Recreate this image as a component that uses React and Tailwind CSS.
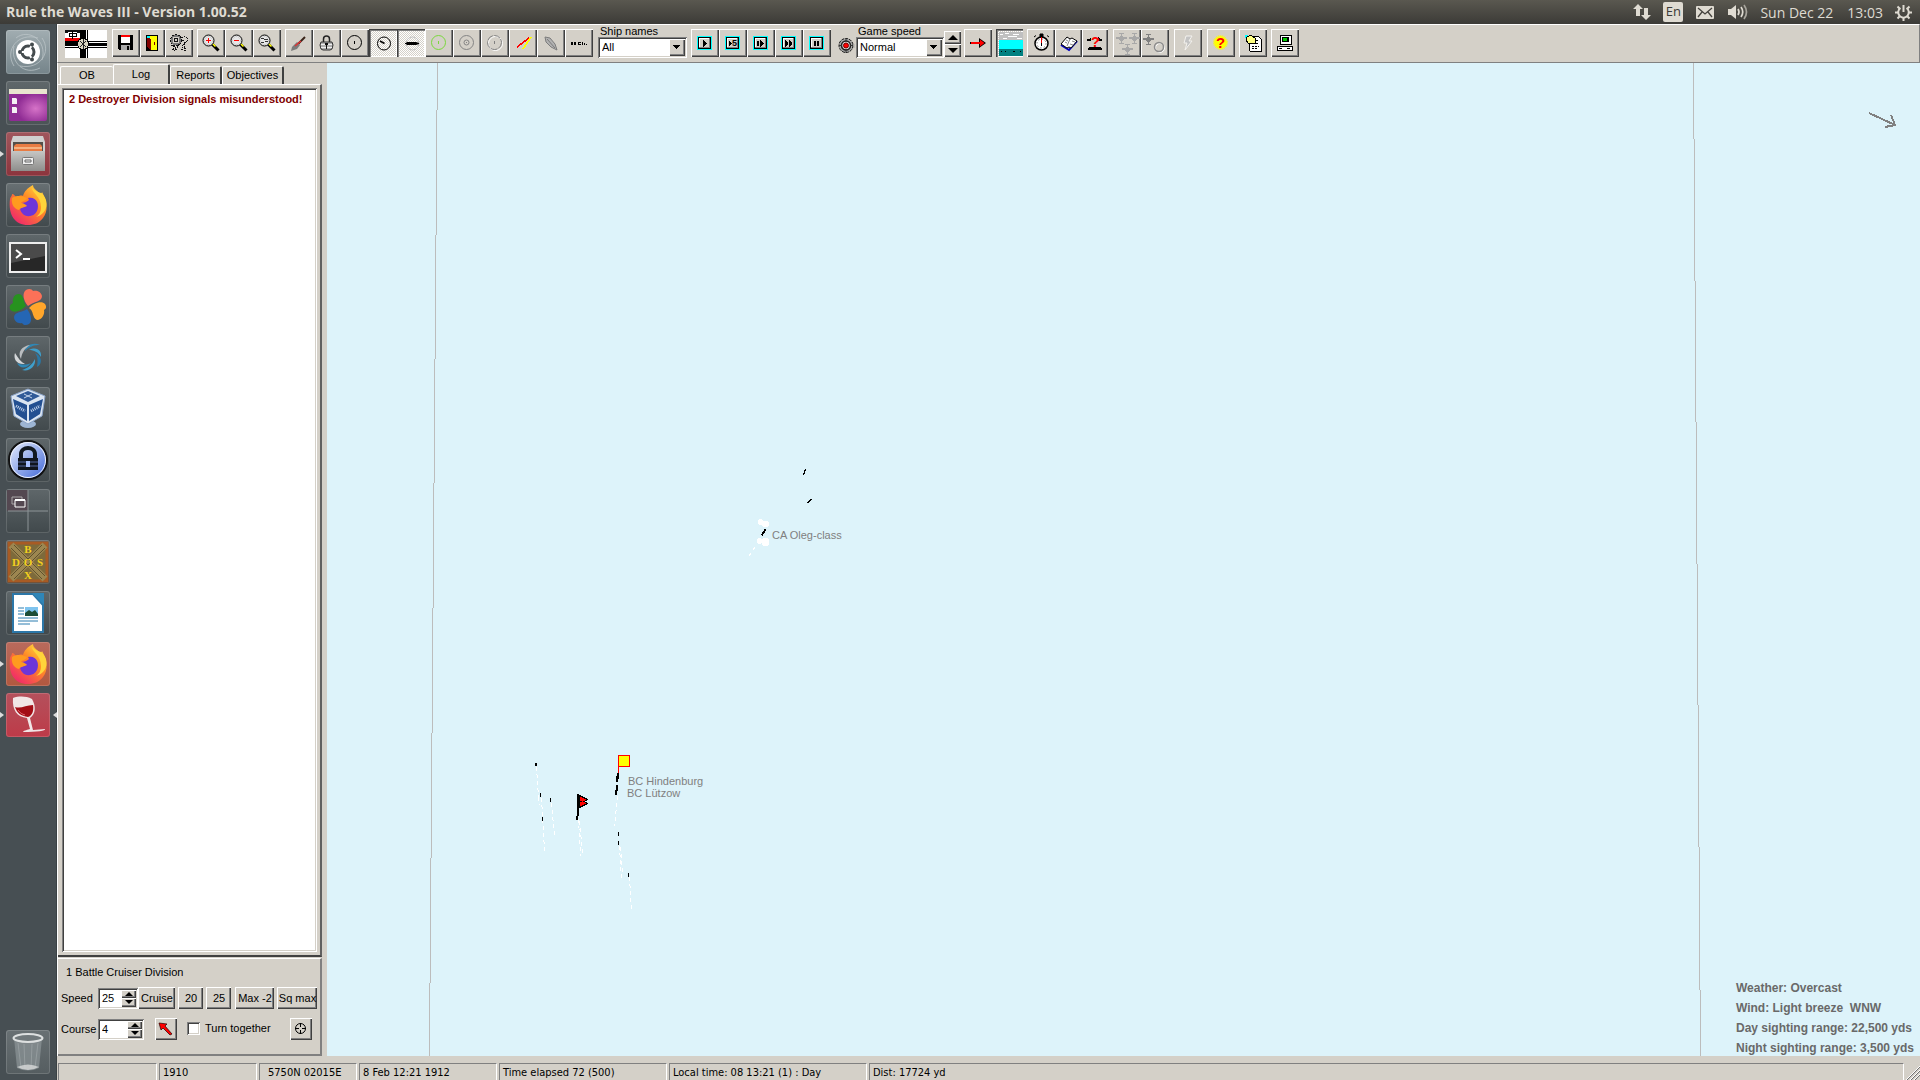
import { useState } from "react";
import clsx from "clsx";

const raised = "bg-[#d4d0c8] shadow-[inset_1px_1px_0_#fff,inset_-1px_-1px_0_#404040,inset_-2px_-2px_0_#808080]";
const sunken = "bg-white shadow-[inset_1px_1px_0_#808080,inset_-1px_-1px_0_#fff,inset_2px_2px_0_#404040,inset_-2px_-2px_0_#d4d0c8]";
const pressed =
  "bg-[repeating-conic-gradient(#fff_0_25%,#d4d0c8_0_50%)] bg-[length:2px_2px] shadow-[inset_1px_1px_0_#404040,inset_2px_2px_0_#808080,inset_-1px_-1px_0_#fff]";

function Glyph({ children, size = 28, crisp = false }) {
  return (
    <svg width={size} height={size} viewBox="0 0 28 28" fill="none" shapeRendering={crisp ? "crispEdges" : "auto"}>
      {children}
    </svg>
  );
}

function ToolButton({ label, active, className = "w-7", children }) {
  return (
    <button aria-label={label} className={clsx("h-7 shrink-0 overflow-hidden", active ? pressed : raised, className)}>
      {children}
    </button>
  );
}

function Magnifier({ children }) {
  return (
    <Glyph>
      <path d="M15 15L21.500 21.500" stroke="#000" strokeWidth="3" />
      <path d="M15.500 14.500l3 3" stroke="#ff0" strokeWidth="1.500" />
      <circle cx="11.500" cy="11.500" r="5.500" fill="#e8e8e8" stroke="#000" />
      <circle cx="11.500" cy="11.500" r="4" stroke="#b8b8b8" strokeDasharray="1 1" />
      {children}
    </Glyph>
  );
}

function PlayFrame({ children }) {
  return (
    <Glyph crisp>
      <path d="M6 7h15v14H6z" fill="#0ff" />
      <path d="M7 8h13v12H7z" fill="#000" />
      <path d="M8 9h11v10H8z" fill="#808080" />
      <path d="M8 9h10v9H8z" fill="#fff" />
      <path d="M9 10h9v8H9z" fill="#d4d0c8" />
      {children}
    </Glyph>
  );
}

function Plane({ x, y, color = "#a8a8a8" }) {
  return (
    <path
      transform={`translate(${x} ${y})`}
      fill={color}
      d="M3 0h5v1H3zM5 1h1v2H5zM0 4h11v2H8v1H7v1H4V7H3V6H0zM4 3h3v1H4zM5 8h1v3H5zM3 10h5v1H3z"
    />
  );
}

function Flag() {
  return (
    <svg width="42" height="28" viewBox="0 0 42 28" shapeRendering="crispEdges" className="shrink-0">
      <path d="M0 0h42v28H0z" fill="#fff" />
      <path d="M0 0h16v3H0z" fill="#111" />
      <path d="M0 8h15v3H0z" fill="#f00000" />
      <path d="M3 2h9v5H3z" fill="#fff" />
      <path d="M4 3h7v3H4zM7 1v8" stroke="#000" fill="none" />
      <path d="M0 12h42v4H0zM16 0h5v28h-5z" fill="#000" />
      <path d="M0 11h42M0 17h42M15 0v28M22 0v28" stroke="#000" />
      <path d="M0 16h42M22 12h20" stroke="#fff" />
      <circle cx="18" cy="14" r="5.5" fill="#d8d4c0" stroke="#000" />
      <path d="M15 11l6 6M21 11l-6 6M18 9v10" stroke="#222" strokeWidth="1" />
    </svg>
  );
}

function ComboBox({ label, id, options, className }) {
  return (
    <div className={clsx("flex shrink-0 flex-col", className)}>
      <label htmlFor={id} className="h-3 pl-[2px] font-['Liberation_Sans'] text-[11px] leading-3">
        {label}
      </label>
      <div className="relative">
        <select
          id={id}
          className={clsx("block h-[21px] w-full appearance-none pl-[4px] font-['Liberation_Sans'] text-[11px]", sunken)}
        >
          {options.map((o) => (
            <option key={o}>{o}</option>
          ))}
        </select>
        <span className={clsx("pointer-events-none absolute top-[2px] right-[2px] h-[17px] w-4", raised)}>
          <svg width="16" height="16" shapeRendering="crispEdges">
            <path d="M4 6h7v1H4zM5 7h5v1H5zM6 8h3v1H6zM7 9h1v1H7z" />
          </svg>
        </span>
      </div>
    </div>
  );
}

function UpDown({ onUp, onDown, className, tall }) {
  const half = clsx("flex flex-1 items-center justify-center", raised);
  return (
    <span className={clsx("flex shrink-0 flex-col", className)}>
      <button aria-label="Increase" onClick={onUp} className={half}>
        <svg width={tall ? 10 : 8} height={tall ? 5 : 4} viewBox="0 0 8 4">
          <path d="M4 0L8 4H0z" />
        </svg>
      </button>
      <button aria-label="Decrease" onClick={onDown} className={half}>
        <svg width={tall ? 10 : 8} height={tall ? 5 : 4} viewBox="0 0 8 4">
          <path d="M0 0h8L4 4z" />
        </svg>
      </button>
    </span>
  );
}

function SpinBox({ id, label, initial, className }) {
  const [value, setValue] = useState(initial);
  return (
    <>
      <label htmlFor={id} className="w-9 shrink-0">
        {label}
      </label>
      <span className={clsx("flex h-[21px] shrink-0 p-[2px]", sunken, className)}>
        <input
          id={id}
          value={value}
          onChange={(e) => setValue(Number(e.target.value) || 0)}
          className="w-0 flex-1 bg-transparent pl-[2px] outline-none"
        />
        <UpDown className="w-[15px]" onUp={() => setValue(value + 1)} onDown={() => setValue(value - 1)} />
      </span>
    </>
  );
}

function TitleBar() {
  return (
    <header className="flex h-6 shrink-0 items-center bg-linear-to-b from-[#5a5850] to-[#3c3b37] pl-[6px] font-['Open_Sans'] text-[#dfdbd2]">
      <h1 className="text-[14px] leading-6 font-bold">Rule the Waves III - Version 1.00.52</h1>
      <div className="ml-auto flex items-center pr-2 text-[14px]">
        <svg width="18" height="18" viewBox="0 0 18 18" fill="#dfdbd2">
          <path d="M5 1L10 6H7v7H3V6H0zM13 17L8 12h3V5h4v7h3z" />
        </svg>
        <span className="ml-3 flex h-5 w-5 items-center justify-center rounded-xs bg-[#dfdbd2] text-[13px] text-[#3c3b37]">
          En
        </span>
        <svg width="18" height="13" viewBox="0 0 18 13" className="ml-[13px]">
          <rect width="18" height="13" rx="1" fill="#dfdbd2" />
          <path d="M2 2l7 6 7-6M2 11l4-5M16 11l-4-5" stroke="#45433e" strokeWidth="1.3" fill="none" />
        </svg>
        <svg width="20" height="18" viewBox="0 0 20 18" className="ml-[14px]" fill="none" stroke="#dfdbd2" strokeWidth="1.7">
          <path d="M0 6h3l5-4v14l-5-4H0z" fill="#dfdbd2" stroke="none" />
          <path d="M10 6q2 3 0 6M13 4q3.500 5 0 10" />
          <path d="M16 2q5 7 0 14" stroke="#a8a59d" />
        </svg>
        <span className="ml-3">Sun Dec 22</span>
        <span className="ml-[14px]">13:03</span>
        <svg width="17" height="17" viewBox="0 0 17 17" className="ml-3" fill="none" stroke="#dfdbd2">
          <path d="M5.500 4a5.300 5.300 0 1 0 6 0" strokeWidth="2" />
          <path d="M8.500 1v7" strokeWidth="2" />
          <path d="M0 8.500h3M14 8.500h3M2.500 2.500l2 2M14.500 2.500l-2 2M2.500 14.500l2-2M14.500 14.500l-2-2M8.500 14v3" strokeWidth="2" />
        </svg>
      </div>
    </header>
  );
}

function FirefoxIcon() {
  return (
    <>
      <path
        d="M4 16c1-3 2-3 2-5 2 0 3 2 4 3 3-1 5-2 7-1 1-4 4-8 10-11 0 4 4 5 7 9 2-1 2-2 2-2 6 10 6 20 1 26-4 5-9 7-15 7C9 42 2 32 4 16z"
        fill="url(#fox)"
      />
      <path d="M22 15c8-2 12 6 9 13-3 6-11 7-15 2-3-4-2-7 0-10 2 0 5-1 7-3z" fill="#6d35d8" />
      <path d="M6 15c5-3 10-2 15 0-1 3-5 3-6 5 3 0 5 2 6 3-3 2-6 1-8 4-5-1-8-6-7-12z" fill="#ff9a1f" />
      <path d="M26 5c0 5 9 8 9 19 0 5-2 8-5 10 12-3 14-17 5-24-3-1-6-2-9-5z" fill="#ffd43a" />
    </>
  );
}

const plainTile = "from-[#5f676a] to-[#41494c]";

const launcherItems = [
  {
    name: "Dash",
    tile: "from-[#a1adb1] to-[#75848a]",
    art: (
      <>
        <path d="M8 36C-2 20 12 2 32 8M36 8c10 14-2 32-22 28M10 8C22-2 42 10 36 30M34 38C18 46 4 32 8 16" stroke="#c0c9cc" fill="none" opacity=".7" />
        <circle cx="22" cy="22" r="12" fill="#fff" />
        <circle cx="22" cy="22" r="6" fill="none" stroke="#444b4e" strokeWidth="3" />
        <path d="M22 22H12M22 22l5-9M22 22l5 9" stroke="#fff" strokeWidth="2" />
        <circle cx="22" cy="22" r="4" fill="#fff" />
        <circle cx="14" cy="22" r="2" fill="#444b4e" />
        <circle cx="26" cy="14.500" r="2" fill="#444b4e" />
        <circle cx="26" cy="29.500" r="2" fill="#444b4e" />
      </>
    ),
  },
  {
    name: "Desktop window",
    tile: "from-[#5f676a] to-[#4b5356]",
    art: (
      <>
        <rect x="3" y="9" width="38" height="31" rx="2" fill="url(#purple)" />
        <path d="M3 8h38v5H3z" fill="#e9e5cf" />
        <path d="M6 17h4l1 1v5H6zM6 26h4l1 1v5H6z" fill="#f4f0f4" />
      </>
    ),
  },
  {
    name: "Files",
    tile: "from-[#a0565c] to-[#8c343d]",
    mark: true,
    art: (
      <>
        <path d="M7 4h30l2 6v29H5V10z" fill="#d0d0cf" />
        <path d="M7 10h30v10H7z" fill="#55504a" />
        <path d="M8 14l2-2h24l2 2v6H8z" fill="#e87c43" />
        <path d="M8 15h28v2H8z" fill="#f4b281" />
        <path d="M5 19h34v20H5z" fill="url(#silver)" />
        <rect x="16.500" y="25.500" width="11" height="7" rx="1" fill="#eee" stroke="#777" />
        <path d="M19 28h6v2h-6z" fill="none" stroke="#666" />
      </>
    ),
  },
  { name: "Firefox", tile: "from-[#687073] to-[#41494c]", art: <FirefoxIcon /> },
  {
    name: "Terminal",
    tile: plainTile,
    art: (
      <>
        <rect x="4" y="9" width="36" height="29" fill="#272727" stroke="#eee" strokeWidth="2" />
        <path d="M5 10h34v12L5 29z" fill="#4a4a4a" />
        <path d="M10 16l5 4-5 4M17 25h7" stroke="#fff" strokeWidth="2" fill="none" />
      </>
    ),
  },
  {
    name: "PlayOnLinux",
    tile: plainTile,
    art: (
      <>
        <path d="M22 21C17 15 16 8 20 5c3-2 6-1 7 1 3-1 8 0 9 5 0 6-8 5-14 10z" fill="#fb7158" />
        <path d="M20 21C13 28 6 28 4 24c-1-3 1-5 3-6-1-4 1-9 6-9 5 1 4 7 7 12z" fill="#27921f" />
        <path d="M23 23c4-5 13-8 16-4 2 3 1 5-1 6 1 4-2 10-7 10-5-2-3-9-8-12z" fill="#ffa62b" />
        <path d="M21 24c4 5 6 12 2 15-3 2-6 1-7-1-4 1-8-2-8-6 1-6 8-4 13-8z" fill="#2566b4" />
      </>
    ),
  },
  {
    name: "Shutter",
    tile: plainTile,
    art: (
      <>
        <path d="M19 15c1-6 8-9 15-6-6 0-10 1-15 6z" fill="#2f87b5" />
        <path d="M23 14c8-4 13 1 12 7-3-5-7-7-12-7z" fill="#3f9fcb" />
        <path d="M29 17c7 3 8 11 2 14 1-6 1-10-2-14z" fill="#2a77a4" />
        <path d="M29 23c1 8-6 13-13 11 6-2 10-5 13-11z" fill="#3f9fcb" />
        <path d="M25 27c-5 7-12 5-14 0 5 2 9 2 14 0z" fill="#2f87b5" />
        <path d="M19 28c-8 1-12-5-10-11 3 5 6 9 10 11z" fill="#d3d6d8" />
        <path d="M15 23c-4-7 1-13 9-14-6 4-8 8-9 14z" fill="#b9bdc0" />
      </>
    ),
  },
  {
    name: "VirtualBox",
    tile: plainTile,
    art: (
      <>
        <ellipse cx="22" cy="37" rx="8" ry="4" fill="#9db5d4" />
        <path d="M22 2l17 7-3 20-14 8-14-8L5 9z" fill="#dbe5f2" stroke="#8ca5ca" />
        <path d="M22 4l12 5-12 6-12-6z" fill="#305a98" />
        <path d="M7 12l14 6v16l-11-7zM37 12l-14 6v16l11-7z" fill="#234f91" />
        <path d="M10 19l9 5M25 24l9-5" stroke="#c6d6ed" strokeWidth="3" strokeDasharray="1 1" />
        <path d="M18 7l8 4M26 7l-8 4" stroke="#c6d6ed" />
      </>
    ),
  },
  {
    name: "KeePass",
    tile: plainTile,
    art: (
      <>
        <circle cx="22" cy="22" r="19" fill="url(#blue)" stroke="#111" strokeWidth="2" />
        <circle cx="22" cy="22" r="17.500" fill="none" stroke="#eef2fb" />
        <path d="M15 21v-5c0-8 14-8 14 0v5" fill="none" stroke="#111820" strokeWidth="4" />
        <path d="M12 20h20v12H12z" fill="#10151e" />
        <path d="M12 24h20M12 28h20" stroke="#53679d" />
        <path d="M20 23h4v6h-4z" fill="#a8c0ff" />
      </>
    ),
  },
  {
    name: "Workspaces",
    tile: plainTile,
    art: (
      <>
        <path d="M1 1h21v21H1z" fill="#544851" />
        <path d="M22 1v41M2 22h40" stroke="#8d9497" />
        <path d="M6 8h10v7H6z" fill="none" stroke="#aaa6a8" />
        <path d="M9 11h10v7H9z" fill="#544851" stroke="#fff" />
        <path d="M9 10h10v2H9z" fill="#fff" />
      </>
    ),
  },
  {
    name: "DOSBox",
    tile: plainTile,
    art: (
      <>
        <path d="M3 3h38v38H3z" fill="#7d6a3b" stroke="#a85b24" strokeWidth="3" />
        <path d="M5 5l34 34M39 5L5 39" stroke="#9c8650" strokeWidth="7" />
        <path d="M5 8l31 31M8 5l31 31M36 5L5 36M39 8L8 39" stroke="#5f512d" />
        <g fill="#f2d01e" fontFamily="Liberation Serif" fontWeight="700" fontSize="11" textAnchor="middle">
          <text x="22" y="13">B</text>
          <text x="10" y="26">D</text>
          <text x="22" y="26">O</text>
          <text x="34" y="26">S</text>
          <text x="22" y="39">X</text>
        </g>
      </>
    ),
  },
  {
    name: "Writer",
    tile: plainTile,
    art: (
      <>
        <path d="M7 3h20l10 11v27H7z" fill="#fff" stroke="#2c77a8" strokeWidth="2" />
        <path d="M26 2h12v12z" fill="#2f86b8" />
        <path d="M19 16h13v9H19z" fill="#7fc4ef" />
        <path d="M19 25v-3l4-3 3 2 3-2 3 4v2z" fill="#1c4d36" />
        <path d="M12 17h6M12 20h6M12 23h6M12 27h20M12 30h20M12 33h12" stroke="#2b7cb0" />
      </>
    ),
  },
  { name: "Firefox session", tile: "from-[#b96a5c] to-[#b1583f]", mark: true, art: <FirefoxIcon /> },
  {
    name: "Wine",
    tile: "from-[#b4505c] to-[#bd3a48]",
    mark: true,
    focused: true,
    art: (
      <>
        <path d="M7 5c6-2 13-2 19 1 4 7 4 15-2 19l3 12 12-1c1 2-8 3-22 3 1-2 5-2 7-3l-3-11C11 24 6 17 7 5z" fill="#f1e5e6" />
        <path d="M9 14c6 2 11-2 18-2 1 6-1 11-5 12-7-1-11-4-13-10z" fill="#a30d16" />
        <path d="M12 17c2 3 4 4 7 5" stroke="#e2626a" fill="none" />
      </>
    ),
  },
];

function LauncherTile({ item }) {
  return (
    <div className="flex items-center">
      <span
        className={clsx("h-0 w-0 border-y-[3px] border-l-[4px] border-y-transparent", item.mark ? "border-l-[#dcdcdc]" : "border-l-transparent")}
      />
      <button
        aria-label={item.name}
        className={clsx("ml-[2px] h-11 w-11 rounded-[3px] bg-linear-to-b shadow-[inset_0_0_0_1px_rgba(255,255,255,0.15)]", item.tile)}
      >
        <svg width="44" height="44" viewBox="0 0 44 44">
          {item.art}
        </svg>
      </button>
      {item.focused && <span className="ml-[3px] h-0 w-0 border-y-[3px] border-r-[4px] border-y-transparent border-r-[#dcdcdc]" />}
    </div>
  );
}

function Launcher() {
  return (
    <nav className="flex w-[57px] shrink-0 flex-col gap-[7px] border-r border-[#3a4144] bg-[#474f53] pt-[6px] pb-[6px]">
      <svg width="0" height="0" className="absolute">
        <defs>
          <linearGradient id="fox" x1="1" y1="0" x2="0.200" y2="1">
            <stop offset="0" stopColor="#fff04a" />
            <stop offset=".45" stopColor="#ff8a25" />
            <stop offset="1" stopColor="#f0246e" />
          </linearGradient>
          <radialGradient id="purple" cx=".7" cy=".6">
            <stop offset="0" stopColor="#d673c8" />
            <stop offset="1" stopColor="#8f2c94" />
          </radialGradient>
          <linearGradient id="silver" x1="0" y1="0" x2="0" y2="1">
            <stop offset="0" stopColor="#c6c6c4" />
            <stop offset="1" stopColor="#8e8e8c" />
          </linearGradient>
          <linearGradient id="blue" x1="0" y1="0" x2="1" y2="1">
            <stop offset="0" stopColor="#eef3ff" />
            <stop offset="1" stopColor="#3b63d6" />
          </linearGradient>
        </defs>
      </svg>
      {launcherItems.map((item) => (
        <LauncherTile key={item.name} item={item} />
      ))}
      <div className="mt-auto">
        <LauncherTile
          item={{
            name: "Trash",
            tile: "from-[#687073] to-[#555d60]",
            art: (
              <>
                <path d="M8 8l3 30q11 5 22 0l3-30z" fill="#8d9598" opacity=".7" />
                <path d="M12 13l3 25M18 14l1 25M26 14l-1 25M32 13l-3 25" stroke="#aab1b3" opacity=".5" />
                <ellipse cx="22" cy="8" rx="14.500" ry="4" fill="#70787b" stroke="#dde0e0" strokeWidth="2" />
                <path d="M11 37q11-5 22 0q-11 6-22 0z" fill="#d8dada" opacity=".8" />
              </>
            ),
          }}
        />
      </div>
    </nav>
  );
}

function Toolbar() {
  return (
    <div className="flex h-[39px] shrink-0 items-start border-t border-r border-b border-l border-t-white border-r-[#808080] border-b-[#808080] border-l-white bg-[#d4d0c8] pt-1 pl-[7px]">
      <div className="pt-px">
        <Flag />
      </div>
      <div className="ml-[5px] flex">
        <ToolButton label="Save">
          <Glyph crisp>
            <path d="M6 6h15v15H7l-1-1z" fill="#000" />
            <path d="M9 7h9v7H9z" fill="#fff" />
            <path d="M9 6h9v2H9z" fill="#f00" />
            <path d="M9 16h9v5H9z" fill="#a8a8a8" />
            <path d="M15 17h2v4h-2z" fill="#000" />
          </Glyph>
        </ToolButton>
        <ToolButton label="Exit" className="w-[25px]">
          <Glyph crisp>
            <path d="M6 6h12v16H6z" fill="#000" />
            <path d="M10 7h7v14h-7z" fill="#ff0" />
            <path d="M7 7l4 4v11l-4-4z" fill="#800000" />
            <path d="M7 7h3v2H7z" fill="#0ff" />
            <path d="M14 13h1v3h-1z" fill="#800000" />
          </Glyph>
        </ToolButton>
        <ToolButton label="Preferences">
          <Glyph crisp>
            <circle cx="11" cy="11" r="2" stroke="#111" />
            <circle cx="11" cy="11" r="4.500" stroke="#777" strokeWidth="2" />
            <circle cx="11" cy="11" r="5.500" stroke="#111" strokeDasharray="2 1" />
            <path d="M16 9l3-2 3 2v3l-3 2-2 4 2 2 3-1M17 11h3M19 14v5M16 20l5 2" stroke="#111" strokeDasharray="2 1" />
            <path d="M6 17l3-1 2 3-2 3M7 20h4M13 17l-2 4M8 16v6M14 15l-1 3" stroke="#111" strokeDasharray="2 1" />
          </Glyph>
        </ToolButton>
      </div>
      <div className="ml-1 flex">
        <ToolButton label="Zoom in">
          <Magnifier>
            <path d="M9 11.500h5M11.500 9v5" stroke="#f00" />
          </Magnifier>
        </ToolButton>
        <ToolButton label="Zoom out">
          <Magnifier>
            <path d="M9 11.500h5" stroke="#f00" />
          </Magnifier>
        </ToolButton>
        <ToolButton label="Zoom to fit">
          <Magnifier>
            <path d="M8 9.500h3M11 10.500h4M8 13.500h3M12 12.500h3" stroke="#333" />
          </Magnifier>
        </ToolButton>
      </div>
      <div className="ml-1 flex">
        <ToolButton label="Gunnery">
          <Glyph>
            <path d="M20 8l-8 8" stroke="#3a2418" strokeWidth="2" />
            <path d="M12 13l3 3-3 4-6 2 1-4z" fill="#7b7b7b" />
            <path d="M16 12l-6 5" stroke="#d33" strokeWidth="1.500" />
          </Glyph>
        </ToolButton>
        <ToolButton label="Lock">
          <Glyph>
            <path d="M10.500 13V10c0-4 6-4 6 0v3" stroke="#222" strokeWidth="1.500" />
            <path d="M8 13h11l1 3-1 4-2 1h-7l-2-1-1-4z" fill="#b0b0b0" stroke="#333" />
            <path d="M8 15.500h11M8 18.500h11" stroke="#eee" />
            <path d="M12 14h3v2h-1v4h-1v-4h-1z" fill="#111" />
          </Glyph>
        </ToolButton>
        <ToolButton label="Gun range">
          <Glyph>
            <circle cx="13.500" cy="13.500" r="7" stroke="#000" />
            <path d="M13.500 12v3" stroke="#000" />
          </Glyph>
        </ToolButton>
        <ToolButton label="Torpedo range" active>
          <Glyph>
            <circle cx="15" cy="14.500" r="6.500" stroke="#000" />
            <path d="M15.500 14.500L11 12" stroke="#000" strokeWidth="1.500" />
          </Glyph>
        </ToolButton>
        <ToolButton label="Ship symbols" active>
          <Glyph>
            <circle cx="15.500" cy="14.500" r="6.500" stroke="#c4c4c4" />
            <path d="M8 14h1l1-1h9l3 1v1l-3 1H10l-1-1H8z" fill="#000" />
          </Glyph>
        </ToolButton>
        <ToolButton label="Visibility range">
          <Glyph>
            <circle cx="13.500" cy="13.500" r="7" stroke="#7ad83c" />
            <path d="M13.500 12v3" stroke="#7ad83c" />
          </Glyph>
        </ToolButton>
        <ToolButton label="Radar range">
          <Glyph>
            <circle cx="13.500" cy="13.500" r="7" stroke="#848484" />
            <circle cx="13.500" cy="13.500" r="2.500" stroke="#848484" />
            <path d="M13 13h1v1h-1z" fill="#848484" />
          </Glyph>
        </ToolButton>
        <ToolButton label="Clock ring">
          <Glyph>
            <circle cx="14.500" cy="14.500" r="7" stroke="#fff" />
            <circle cx="13.500" cy="13.500" r="7" stroke="#808080" strokeDasharray="7 1" />
            <path d="M13.500 12v3" stroke="#808080" />
          </Glyph>
        </ToolButton>
        <ToolButton label="Fire lines">
          <Glyph crisp>
            <path d="M22 8L14 20" stroke="#ff0" strokeWidth="1.500" />
            <path d="M8 18L20 9" stroke="#f00" strokeWidth="1.500" />
          </Glyph>
        </ToolButton>
        <ToolButton label="Tracks">
          <Glyph>
            <path d="M8 8l5 1 5 6 2 6-6-3-5-5z" fill="#b2b2b2" stroke="#7c7c7c" />
            <path d="M10 10l8 9" stroke="#7c7c7c" />
          </Glyph>
        </ToolButton>
        <ToolButton label="Formation">
          <Glyph crisp>
            <path d="M6 13h2v3H6zM9 13h2v3H9zM13 13h3v1h-2v1h2v1h-3zM17 13h1v3h-1zM19 14h1v2h-1zM21 15h1v1h-1z" fill="#000" />
          </Glyph>
        </ToolButton>
      </div>
      <ComboBox id="ship-names" label="Ship names" options={["All", "Own", "None"]} className="-mt-1 ml-[5px] w-[89px]" />
      <div className="ml-1 flex">
        <ToolButton label="Play">
          <PlayFrame>
            <path d="M12 11h1v7h-1zM13 12h1v5h-1zM14 13h1v3h-1zM15 14h1v1h-1z" fill="#000" />
          </PlayFrame>
        </ToolButton>
        <ToolButton label="Play five turns">
          <PlayFrame>
            <path d="M10 12h1v5h-1zM11 13h1v3h-1zM12 14h1v1h-1z" fill="#000" />
            <text x="13" y="17" fontSize="9" fontWeight="700" fontFamily="Liberation Sans" fill="#000">5</text>
          </PlayFrame>
        </ToolButton>
        <ToolButton label="Step">
          <PlayFrame>
            <path d="M10 12h2v5h-2zM13 11h1v7h-1zM14 12h1v5h-1zM15 13h1v3h-1zM16 14h1v1h-1z" fill="#000" />
          </PlayFrame>
        </ToolButton>
        <ToolButton label="Fast forward">
          <PlayFrame>
            <path d="M10 11h1v7h-1zM11 12h1v5h-1zM12 13h1v3h-1zM14 11h1v7h-1zM15 12h1v5h-1zM16 13h1v3h-1z" fill="#000" />
          </PlayFrame>
        </ToolButton>
        <ToolButton label="Pause">
          <PlayFrame>
            <path d="M11 12h2v5h-2zM14 12h2v5h-2z" fill="#000" />
          </PlayFrame>
        </ToolButton>
      </div>
      <svg width="17" height="17" viewBox="0 0 17 17" fill="none" className="mt-2 ml-[7px] shrink-0">
        <circle cx="8" cy="8.500" r="7" fill="#aaa" stroke="#111" strokeDasharray="3 1" />
        <circle cx="8" cy="8.500" r="4.500" fill="#ddd" stroke="#222" strokeWidth="1.500" />
        <circle cx="8" cy="8.500" r="2.500" fill="#f00" stroke="#700" />
        <path d="M8 1v4M8 12v4M1 8.500h3M12 8.500h3" stroke="#333" />
        <path d="M16 7v4" stroke="#aaa" />
      </svg>
      <ComboBox id="game-speed" label="Game speed" options={["Normal", "Slow", "Fast"]} className="-mt-1 ml-px w-[88px]" />
      <UpDown tall className="mt-[2px] h-[26px] w-[17px]" />
      <ToolButton label="Next turn" className="ml-[3px] w-7">
        <Glyph>
          <path d="M6 13h9V9l7 5-7 5v-4H6z" fill="#000" />
          <path d="M7 13h9v-2.500l4.500 3.500-4.500 3.500V15H7z" fill="#f00" />
        </Glyph>
      </ToolButton>
      <ToolButton label="Sea view" active className="ml-1 w-[27px]">
        <Glyph crisp>
          <path d="M3 3h24v8H3z" fill="#c0c0c0" />
          <path d="M4 5h3M9 4h4M17 5h6M12 7h9M7 9h4M21 9h5" stroke="#fff" />
          <path d="M3 11h24v9H3z" fill="#0ff" />
          <path d="M3 20h24v7H3z" fill="#008080" />
          <path d="M5 22h1M9 22h1M17 22h2M24 22h1" stroke="#000" />
        </Glyph>
      </ToolButton>
      <div className="ml-1 flex">
        <ToolButton label="Time">
          <Glyph>
            <path d="M13 5h3v3h-3zM7 8l2-1.500M22 8l-2-1.500" fill="#000" stroke="#000" />
            <circle cx="14.500" cy="14.500" r="6.500" fill="#fff" stroke="#000" strokeWidth="1.500" />
            <circle cx="14.500" cy="14.500" r="4.500" stroke="#444" strokeDasharray="1 2.500" />
            <path d="M14.500 8v7" stroke="#e00" />
            <path d="M14.500 14v3" stroke="#000" />
          </Glyph>
        </ToolButton>
        <ToolButton label="Ship log" className="w-[27px]">
          <Glyph>
            <path d="M6 16l8 5 8-9" stroke="#0000c0" strokeWidth="2" />
            <path d="M6 15l6-7 3 2 2-1 5 3-6 7-2-1-2 1z" fill="#fff" stroke="#000" />
            <path d="M15 10l-3 7M17 12l3 1M11 11l2 1M10 13l2 1M15 15l3 1" stroke="#555" strokeWidth=".7" />
          </Glyph>
        </ToolButton>
        <ToolButton label="Unknown contacts" className="w-[26px]">
          <Glyph crisp>
            <path d="M5 10h3l1-2h8l1 2h2v2H5zM6 19l2-1h10l2 1v2H6zM9 8V7h7v1z" fill="#000" />
            <path d="M9 6h7v12H9z" fill="#d4d0c8" />
            <text x="9" y="18" fontSize="14" fontWeight="700" fontFamily="Liberation Sans" fill="#f00">?</text>
          </Glyph>
        </ToolButton>
      </div>
      <div className="ml-[5px] flex">
        <ToolButton label="Air group">
          <Glyph crisp>
            <Plane x="3" y="4" />
            <Plane x="16" y="4" />
            <Plane x="9" y="15" />
          </Glyph>
        </ToolButton>
        <ToolButton label="Air patrol">
          <Glyph>
            <Plane x="2" y="5" color="#808080" />
            <circle cx="19" cy="19" r="4.500" stroke="#fff" />
            <circle cx="18" cy="18" r="4.500" stroke="#8c8c8c" strokeWidth="1.500" />
          </Glyph>
        </ToolButton>
      </div>
      <ToolButton label="Radio" className="ml-[5px] w-7">
        <Glyph>
          <path d="M12 7h6l-3 5h3l-7 9 2-7h-3z" fill="#c4c4c4" stroke="#f4f2ee" />
        </Glyph>
      </ToolButton>
      <ToolButton label="Help" className="ml-[5px] w-7">
        <Glyph>
          <circle cx="13.500" cy="13.500" r="6.500" fill="#ff0" />
          <circle cx="13.500" cy="13.500" r="7" stroke="#ff0" strokeDasharray="1 1" />
          <text x="9" y="19" fontSize="15" fontWeight="700" fontFamily="Liberation Sans" fill="#f00">?</text>
        </Glyph>
      </ToolButton>
      <ToolButton label="Notes" className="ml-1 w-7">
        <Glyph crisp>
          <path d="M10 7h9l3 3v12H11z" fill="#fff" stroke="#000" />
          <path d="M14 11h6M14 14h6M13 17h7M13 19h6" stroke="#000" strokeDasharray="2 1" />
          <path d="M6 6h3v3H6z" fill="#0ff" />
          <path d="M8 8l4-2 4 3 1 5-3 1-5-1-2-3z" fill="#ffff80" stroke="#000" />
        </Glyph>
      </ToolButton>
      <ToolButton label="Computer" className="ml-1 w-7">
        <Glyph crisp>
          <path d="M9 6h11v9H9z" fill="#fff" stroke="#000" />
          <path d="M11 8h7v5h-7z" fill="#000" />
          <path d="M12 9h4v3h-4z" fill="#0c0" />
          <path d="M6 17h15v4H6z" fill="#fff" stroke="#000" />
          <path d="M8 19h3M16 19h3" stroke="#000" />
        </Glyph>
      </ToolButton>
    </div>
  );
}

const tabs = [
  { name: "OB", width: "w-[53px]" },
  { name: "Log", width: "w-[57px]" },
  { name: "Reports", width: "w-[52px]" },
  { name: "Objectives", width: "w-[62px]" },
];

const smallButton = "h-[22px] shrink-0 overflow-hidden pl-px whitespace-nowrap";

function SidePanel() {
  const [tab, setTab] = useState("Log");

  return (
    <aside className="flex w-[270px] shrink-0 flex-col border-l border-white bg-[#d4d0c8] pr-[5px] font-['Liberation_Sans'] text-[11px]">
      <div role="tablist" className="flex h-[21px] items-end pl-[2px]">
        {tabs.map((t) => (
          <button
            key={t.name}
            role="tab"
            aria-selected={tab === t.name}
            onClick={() => setTab(t.name)}
            className={clsx(
              "rounded-t-xs border-t border-l border-white",
              t.width,
              tab === t.name ? "h-5 border-r-2 border-r-[#404040] pb-px" : "h-[18px]",
              tab !== t.name && t.name !== "OB" && "border-r-2 border-r-[#404040]"
            )}
          >
            {t.name}
          </button>
        ))}
      </div>
      <div className="flex flex-1 border-t border-r-2 border-b-2 border-t-white border-r-[#606060] border-b-[#404040] py-[3px] pr-[3px] pl-1">
        <div role="tabpanel" className={clsx("flex-1 overflow-hidden pt-[3px] pl-[7px]", sunken)}>
          <p className="leading-4 font-bold whitespace-nowrap text-[#800000]">2 Destroyer Division signals misunderstood!</p>
        </div>
      </div>
      <section className="mt-px h-[98px] border-t border-r-2 border-b-2 border-t-white border-r-[#808080] border-b-[#808080] pl-[3px]">
        <h2 className="pt-[5px] pl-[5px] leading-4">1 Battle Cruiser Division</h2>
        <div className="mt-[7px] flex h-[22px] items-center">
          <SpinBox id="speed" label="Speed" initial={25} className="ml-px w-10" />
          <button className={clsx(smallButton, raised, "w-[37px]")}>Cruise</button>
          <button className={clsx(smallButton, raised, "ml-[3px] w-[25px]")}>20</button>
          <button className={clsx(smallButton, raised, "ml-[3px] w-[25px]")}>25</button>
          <button className={clsx(smallButton, raised, "ml-1 w-[39px]")}>Max -2</button>
          <button className={clsx(smallButton, raised, "ml-[3px] w-10")}>Sq max</button>
        </div>
        <div className="mt-[9px] flex h-[22px] items-center">
          <SpinBox id="course" label="Course" initial={4} className="ml-px w-[46px]" />
          <button aria-label="Set course on map" className={clsx("ml-[11px] h-[22px] w-[22px] shrink-0", raised)}>
            <svg width="22" height="22" viewBox="0 0 22 22">
              <path d="M4 5l8 1-2 2 7 8-2 1-7-7-2 2z" fill="#f00" stroke="#200" strokeWidth=".7" />
            </svg>
          </button>
          <label className="ml-[10px] flex shrink-0 items-center gap-[5px] pb-[2px]">
            <input type="checkbox" className={clsx("h-[13px] w-[13px] appearance-none", sunken)} />
            Turn together
          </label>
          <button aria-label="Centre on division" className={clsx("mr-2 ml-auto h-[22px] w-[22px] shrink-0", raised)}>
            <svg width="22" height="22" viewBox="0 0 22 22" fill="none" stroke="#000">
              <circle cx="10.500" cy="10.500" r="5" />
              <path d="M10.500 5v4M10.500 12v4M5 10.500h4M12 10.500h4" />
            </svg>
          </button>
        </div>
      </section>
    </aside>
  );
}

// ship hulls and their wakes, in sea chart coordinates
const hulls = [
  "M208 700h2v3h-2z",
  "M213 730h1v4h-1zM215 754h1v4h-1zM223 735h1v4h-1z",
  "M290 710h2v6h-1v3h-2v-6h1z",
  "M289 722h2v6h-1v4h-2v-5h1z",
  "M291 769h1v4h-1zM291 778h1v4h-1zM301 810h1v4h-1z",
];
const wakes = [
  "M209.500 704l2 30",
  "M211.500 734l1 8M214.500 735l3 53",
  "M224.500 740l3 33",
  "M251.500 756l2 37M252.500 758l3 32",
  "M290.500 733l-3 30",
  "M292.500 783l2 34M293.500 784l2 26",
  "M302.500 814l2 35",
];

function SeaMap() {
  return (
    <main className="relative flex flex-1 flex-col items-end justify-end bg-[#ddf3fa]">
      <svg className="absolute inset-0 h-full w-full" shapeRendering="crispEdges" fill="none">
        <line x1="6.930%" y1="0" x2="6.430%" y2="100%" stroke="#bcbcbc" />
        <line x1="85.780%" y1="0" x2="86.220%" y2="100%" stroke="#bcbcbc" />
        <g stroke="#fff" strokeDasharray="4 3">
          {wakes.map((d) => (
            <path key={d} d={d} />
          ))}
          <path d="M428 484l-8 12" />
        </g>
        <g fill="#000">
          {hulls.map((d) => (
            <path key={d} d={d} />
          ))}
        </g>
        <path d="M476.500 412l2-6M480.500 440l4-4" stroke="#000" strokeWidth="1.5" />
        <g fill="#fff">
          <circle cx="433.500" cy="459" r="3" />
          <circle cx="438.500" cy="461" r="3.500" />
          <circle cx="432.500" cy="478" r="3" />
          <circle cx="438.500" cy="479" r="4" />
        </g>
        <path d="M434.500 472.500l4-6" stroke="#000" strokeWidth="2" />
        <path d="M291.500 692.500h11v11h-11z" fill="#ff0" stroke="#f00" />
        <path d="M291.500 704v6" stroke="#f00" />
        <path d="M252.500 732.500l8 4-3 2 3 2-8 4z" fill="#f00" stroke="#000" />
        <path d="M253 738.500h5" stroke="#000" strokeDasharray="2 1" />
        <path d="M251 731v22M250 753v4" stroke="#000" strokeWidth="2" />
        <g fill="#808080" fontFamily="Liberation Sans" fontSize="11">
          <text x="445" y="476">CA Oleg-class</text>
          <text x="301" y="722">BC Hindenburg</text>
          <text x="300" y="734">BC Lützow</text>
        </g>
      </svg>
      <svg
        width="30"
        height="18"
        viewBox="0 0 30 18"
        fill="none"
        stroke="#808080"
        strokeWidth="2"
        shapeRendering="crispEdges"
        className="absolute top-[48px] right-[22px]"
      >
        <path d="M1 2l26 12M23 4l4 10-10 2" />
      </svg>
      <ul className="relative pr-[6px] font-['Liberation_Sans'] text-[12px] leading-5 font-bold text-[#696969]">
        <li>Weather: Overcast</li>
        <li className="whitespace-pre">Wind: Light breeze  WNW</li>
        <li>Day sighting range: 22,500 yds</li>
        <li className="-mb-[2px]">Night sighting range: 3,500 yds</li>
      </ul>
    </main>
  );
}

function StatusBar() {
  const cell = "border-t border-l border-r border-t-[#808080] border-l-[#808080] border-r-white leading-[17px] whitespace-pre";
  return (
    <footer className="flex h-6 shrink-0 gap-[2px] bg-[#d4d0c8] pt-[7px] pl-px font-['DejaVu_Sans_Condensed','DejaVu_Sans'] text-[11px] text-black">
      <span className={clsx(cell, "w-[99px]")} />
      <span className={clsx(cell, "w-[98px] pl-[3px]")}>1910</span>
      <span className={clsx(cell, "w-[98px] pl-2")}>5750N 02015E</span>
      <span className={clsx(cell, "w-[138px] pl-[3px]")}>8 Feb 12:21 1912</span>
      <span className={clsx(cell, "w-[168px] pl-[3px]")}>Time elapsed 72 (500)</span>
      <span className={clsx(cell, "w-[198px] pl-[3px]")}>Local time: 08 13:21 (1) : Day</span>
      <span className={clsx(cell, "flex-1 pl-[3px]")}>Dist: 17724 yd</span>
      <svg width="14" height="17" viewBox="0 0 14 17" stroke="#707070" className="shrink-0">
        <path d="M1 17L14 4M5 17l9-9M9 17l5-5" />
        <path d="M0 17L14 3M4 17L14 7M8 17l6-6" stroke="#fff" />
      </svg>
    </footer>
  );
}

function App() {
  return (
    <div className="flex min-h-screen flex-col text-black">
      <TitleBar />
      <div className="flex flex-1">
        <Launcher />
        <div className="flex min-w-0 flex-1 flex-col">
          <Toolbar />
          <div className="flex flex-1">
            <SidePanel />
            <SeaMap />
          </div>
          <StatusBar />
        </div>
      </div>
    </div>
  );
}

export default App;
